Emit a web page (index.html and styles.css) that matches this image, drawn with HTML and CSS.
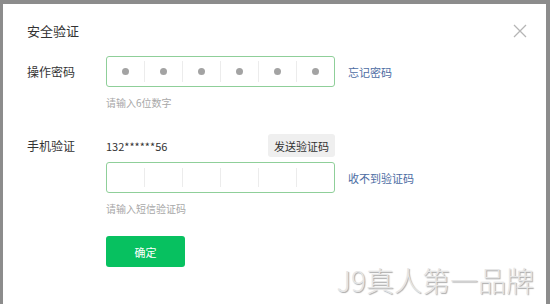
FILE: index.html
```html
<!DOCTYPE html>
<html lang="zh">
<head>
    <meta charset="UTF-8">
    <title>安全验证</title>
    <link rel="stylesheet" href="styles.css">
</head>
<body>
    <div class="dialog">
        <header class="head">
            <h1>安全验证</h1>
            <span class="close">
                <svg width="14" height="14" viewBox="0 0 14 14"><path d="M1 1L13 13M13 1L1 13" stroke="#b5b5b5" stroke-width="1.3" fill="none"/></svg>
            </span>
        </header>

        <div class="row">
            <span class="label">操作密码</span>
            <div class="code">
                <span class="cell"><i class="dot"></i></span>
                <span class="cell"><i class="dot"></i></span>
                <span class="cell"><i class="dot"></i></span>
                <span class="cell"><i class="dot"></i></span>
                <span class="cell"><i class="dot"></i></span>
                <span class="cell"><i class="dot"></i></span>
            </div>
            <a class="link">忘记密码</a>
        </div>
        <p class="hint">请输入6位数字</p>

        <div class="row phone-row">
            <span class="label">手机验证</span>
            <div class="phone">
                <span>132******56</span>
                <button class="send">发送验证码</button>
            </div>
        </div>
        <div class="row sms-row">
            <span class="label"></span>
            <div class="code">
                <span class="cell"></span>
                <span class="cell"></span>
                <span class="cell"></span>
                <span class="cell"></span>
                <span class="cell"></span>
                <span class="cell"></span>
            </div>
            <a class="link">收不到验证码</a>
        </div>
        <p class="hint">请输入短信验证码</p>

        <button class="ok">确定</button>

        <div class="mark">J9真人第一品牌</div>
    </div>
</body>
</html>
```

FILE: styles.css
```css
body {
    margin: 0;
    background-color: #8c8c8c;
    font-family: "Noto Sans CJK SC", "Liberation Sans", sans-serif;
}

.dialog {
    position: relative;
    margin: 4px 4px 0 3px;
    height: 300px;
    background-color: #fff;
    box-sizing: border-box;
    padding: 0 0 0 24px;
}

.head {
    display: flex;
    justify-content: space-between;
    align-items: center;
    height: 52px;
    padding-right: 19px;
}

h1 {
    margin: 0;
    font-size: 13px;
    font-weight: normal;
    color: #333;
}

.close {
    display: flex;
    margin-top: 1px;
}

.row {
    display: flex;
    align-items: center;
}

.label {
    width: 79px;
    font-size: 12px;
    color: #333;
}

.code {
    display: flex;
    width: 229px;
    height: 31px;
    box-sizing: border-box;
    border: 1px solid #8fcf99;
    border-radius: 3px;
    padding: 4px 0;
}

.cell {
    flex: 1;
    display: flex;
    align-items: center;
    justify-content: center;
    border-left: 1px solid #ececec;
}

.cell:first-child {
    border-left: none;
}

.dot {
    width: 7px;
    height: 7px;
    border-radius: 50%;
    background-color: #a3a3a3;
}

.link {
    margin-left: 13px;
    font-size: 11px;
    color: #4c6ca3;
}

.hint {
    margin: 9px 0 0 79px;
    font-size: 10px;
    color: #a8a8a8;
    line-height: 14px;
}

.phone-row {
    margin-top: 24px;
}

.phone {
    display: flex;
    justify-content: space-between;
    align-items: center;
    width: 229px;
    font-size: 11px;
    color: #333;
}

.send {
    border: none;
    background-color: #efefef;
    border-radius: 3px;
    color: #333;
    font-family: inherit;
    font-size: 11px;
    height: 23px;
    padding: 0 6px;
}

.sms-row {
    margin-top: 5px;
}

.sms-row .code {
    padding: 5px 0;
}

.ok {
    display: block;
    margin: 20px 0 0 79px;
    width: 79px;
    height: 31px;
    border: none;
    border-radius: 3px;
    background-color: #07c160;
    color: #fff;
    font-family: inherit;
    font-size: 11px;
}

.mark {
    position: absolute;
    right: 12px;
    bottom: 6px;
    font-family: "Noto Sans CJK SC", sans-serif;
    font-size: 28px;
    font-weight: 300;
    color: #e6e6e6;
    text-shadow: 1px 1px 1px #a8a8a8;
    line-height: 36px;
}
```
